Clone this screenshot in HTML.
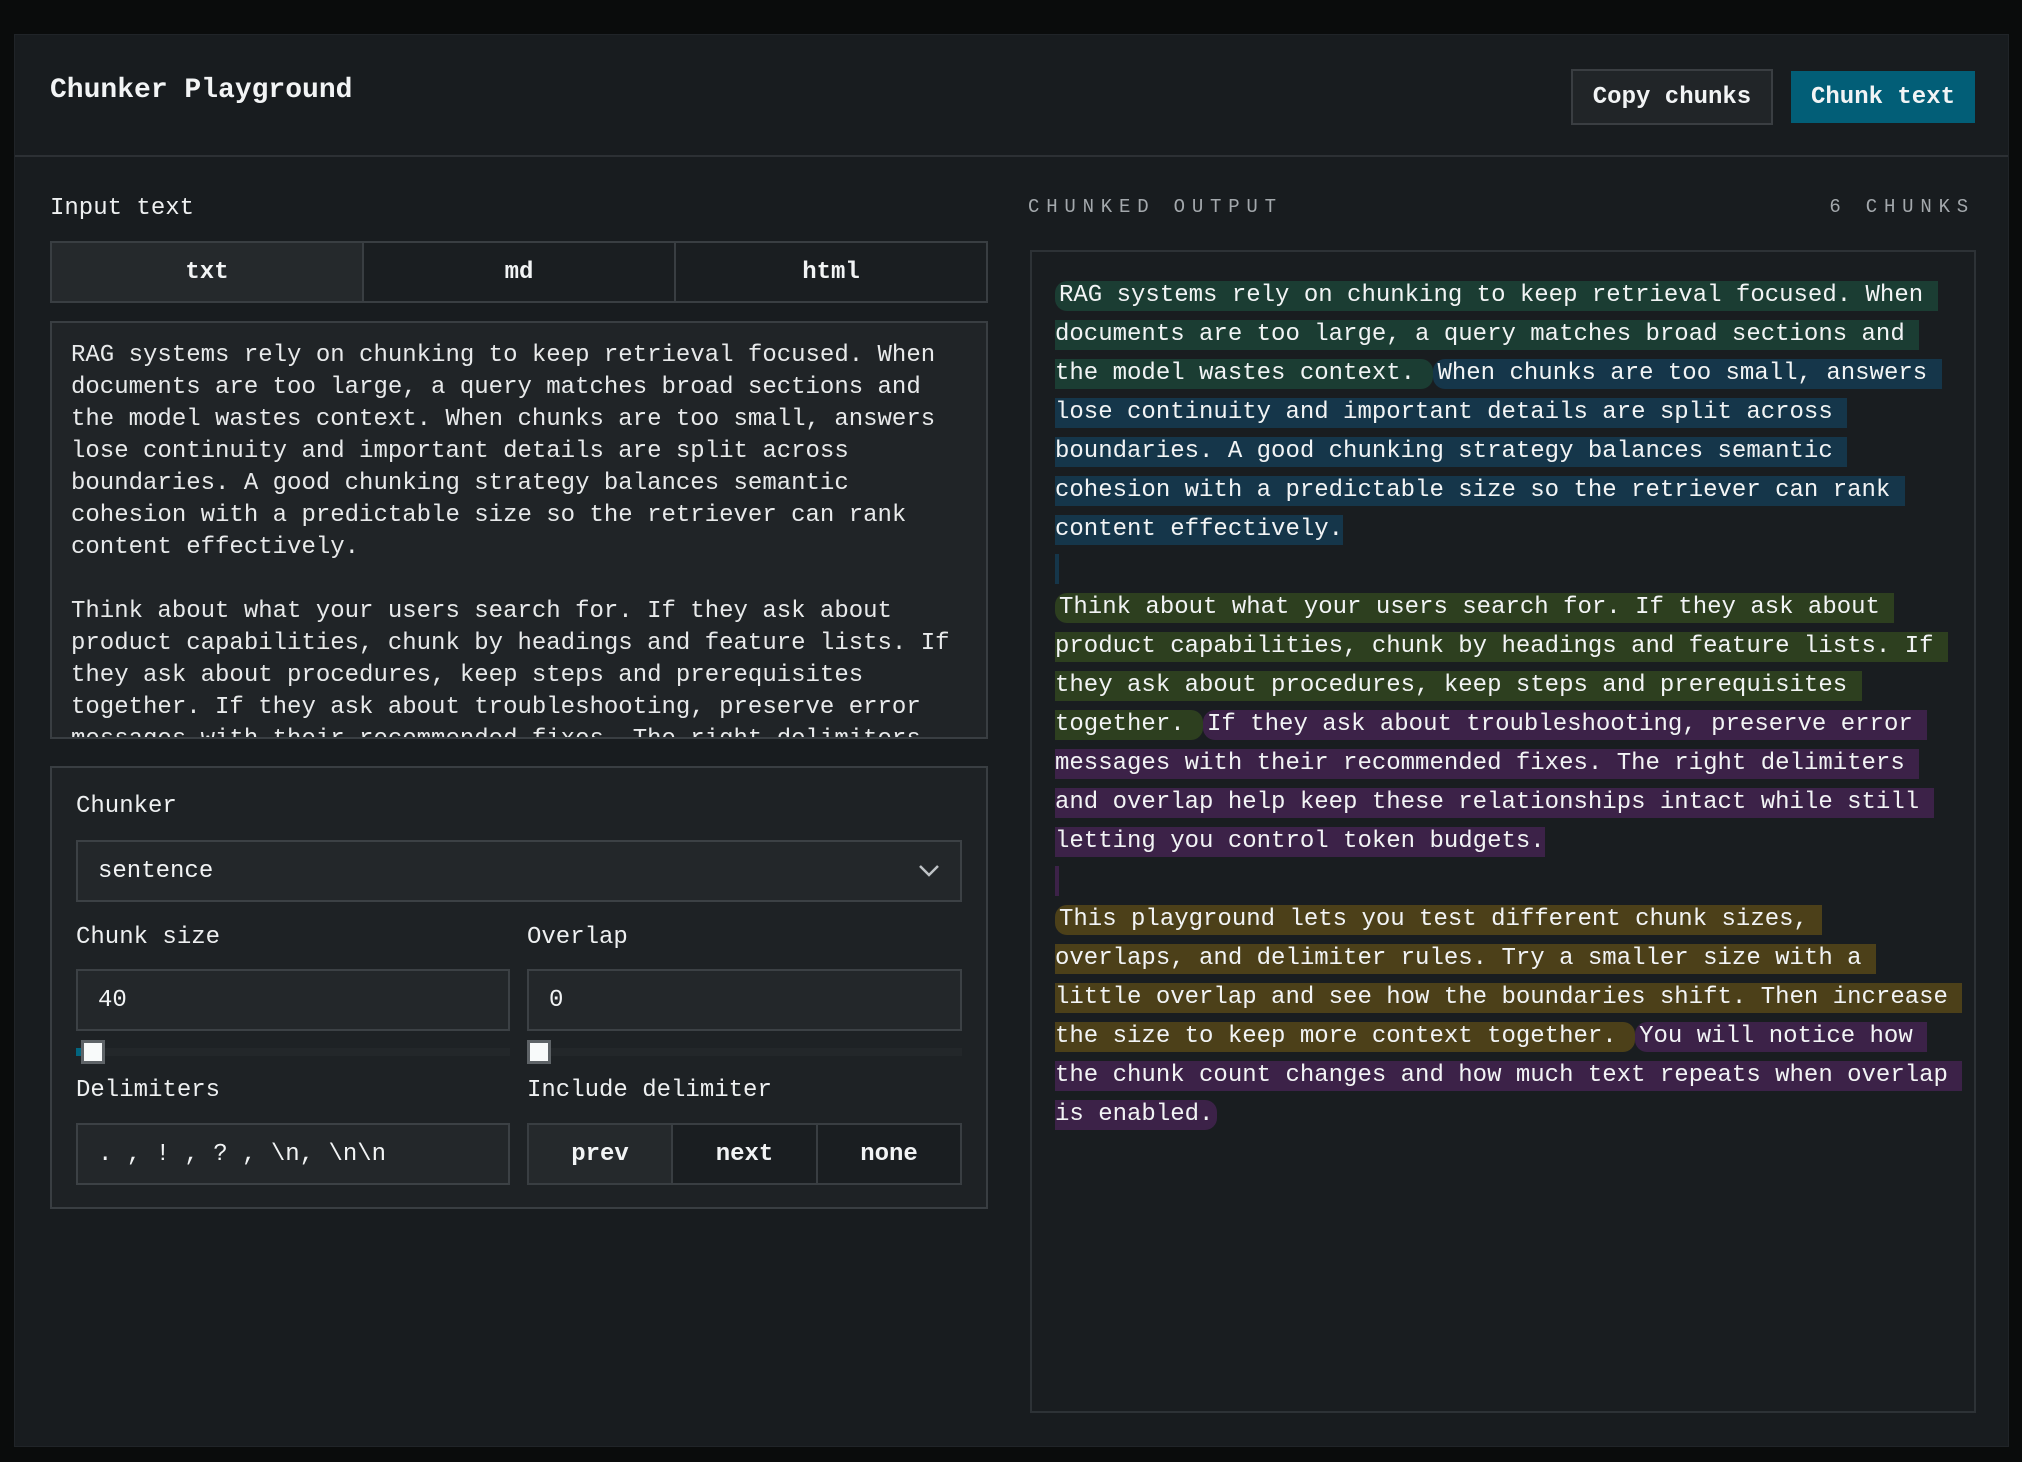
<!DOCTYPE html>
<html><head><meta charset="utf-8"><style>
*{box-sizing:border-box;margin:0;padding:0}
body{width:2022px;height:1462px;background:#0a0c0c;font-family:"Liberation Mono",monospace;color:#f2f4f5;position:relative;overflow:hidden}
.panel{position:absolute;left:14px;top:34px;width:1995px;height:1413px;background:#181c1f;border:1px solid #202428}
.abs{position:absolute}
.hdr{left:0;top:0;width:100%;height:122px;border-bottom:2px solid #2c3034}
.title{left:35px;top:40px;font-size:28px;font-weight:bold}
.btn{font-size:24px;font-weight:bold;display:flex;align-items:center;justify-content:center}
.lbl{font-size:24px;color:#eef0f1}
.box{background:#1e2225;border:2px solid #393e42}
.tab{position:absolute;top:0;height:100%;display:flex;align-items:center;justify-content:center;font-size:24px;font-weight:bold}
.ta{font-size:24px;line-height:32px;white-space:pre;overflow:hidden;padding:17px 0 0 19px;color:#e8eaeb}
.inp{background:#23272a;border:2px solid #3c4145;font-size:24px;display:flex;align-items:center;padding-left:20px}
.track{height:8px;background:#23272a}
.thumb{width:24px;height:24px;background:#f8fafa;border:3px solid #5e6367}
.out{font-size:24px;white-space:pre}
.ln{position:absolute;left:0;height:39px;display:flex;align-items:center}
.s{display:inline-block;height:30px;line-height:30px}
.g{background:#1b3d33}.b{background:#15364a}.o{background:#2d3f1f}.p{background:#3c2248}.y{background:#4c4019}
.st{border-radius:12px 0 0 12px;padding-left:4px}
.en{border-radius:0 12px 12px 0;padding-right:4px}
</style></head><body>
<div class="panel">
  <div class="abs hdr"></div>
  <div class="abs title">Chunker Playground</div>
  <div class="abs btn" style="left:1556px;top:34px;width:202px;height:56px;background:#212528;border:2px solid #3a3e42">Copy chunks</div>
  <div class="abs btn" style="left:1776px;top:36px;width:184px;height:52px;background:#025e77">Chunk text</div>

  <div class="abs lbl" style="left:35px;top:160px">Input text</div>
  <div class="abs box" style="left:35px;top:206px;width:938px;height:62px;background:#1a1e21">
    <div class="tab" style="left:0;width:312px;background:#25292c;border-right:2px solid #393e42">txt</div>
    <div class="tab" style="left:312px;width:312px;border-right:2px solid #393e42">md</div>
    <div class="tab" style="left:624px;width:310px">html</div>
  </div>
  <div class="abs box ta" style="left:35px;top:286px;width:938px;height:418px;background:#202427">RAG systems rely on chunking to keep retrieval focused. When
documents are too large, a query matches broad sections and
the model wastes context. When chunks are too small, answers
lose continuity and important details are split across
boundaries. A good chunking strategy balances semantic
cohesion with a predictable size so the retriever can rank
content effectively.

Think about what your users search for. If they ask about
product capabilities, chunk by headings and feature lists. If
they ask about procedures, keep steps and prerequisites
together. If they ask about troubleshooting, preserve error
messages with their recommended fixes. The right delimiters</div>

  <div class="abs box" style="left:35px;top:731px;width:938px;height:443px"></div>
  <div class="abs lbl" style="left:61px;top:758px">Chunker</div>
  <div class="abs inp" style="left:61px;top:805px;width:886px;height:62px">sentence
    <svg style="position:absolute;right:20px;top:22px" width="22" height="14" viewBox="0 0 22 14"><path d="M2 2 L11 11 L20 2" stroke="#bfc3c6" stroke-width="2.5" fill="none"/></svg></div>
  <div class="abs lbl" style="left:61px;top:889px">Chunk size</div>
  <div class="abs lbl" style="left:512px;top:889px">Overlap</div>
  <div class="abs inp" style="left:61px;top:934px;width:434px;height:62px">40</div>
  <div class="abs inp" style="left:512px;top:934px;width:435px;height:62px">0</div>
  <div class="abs track" style="left:61px;top:1013px;width:434px"></div>
  <div class="abs" style="left:61px;top:1013px;width:8px;height:8px;background:#02657f"></div>
  <div class="abs thumb" style="left:66px;top:1005px"></div>
  <div class="abs track" style="left:512px;top:1013px;width:435px"></div>
  <div class="abs thumb" style="left:512px;top:1005px"></div>
  <div class="abs lbl" style="left:61px;top:1042px">Delimiters</div>
  <div class="abs lbl" style="left:512px;top:1042px">Include delimiter</div>
  <div class="abs inp" style="left:61px;top:1088px;width:434px;height:62px">. , ! , ? , \n, \n\n</div>
  <div class="abs box" style="left:512px;top:1088px;width:435px;height:62px;background:#1a1e21">
    <div class="tab" style="left:0;width:144px;background:#25292c;border-right:2px solid #393e42">prev</div>
    <div class="tab" style="left:144px;width:145px;border-right:2px solid #393e42">next</div>
    <div class="tab" style="left:289px;width:142px">none</div>
  </div>

  <div class="abs" style="left:1013px;top:161px;font-size:19px;letter-spacing:6.8px;color:#a3a8ac">CHUNKED OUTPUT</div>
  <div class="abs" style="right:40px;top:161px;font-size:19px;letter-spacing:6.8px;color:#a3a8ac;margin-right:-7px">6 CHUNKS</div>
  <div class="abs" style="left:1015px;top:215px;width:946px;height:1163px;background:#191d20;border:2px solid #2d3236"></div>
  <div class="abs out" style="left:1040px;top:241px;width:920px">
<div class="ln" style="top:0"><span class="s g st">RAG systems rely on chunking to keep retrieval focused. When </span></div>
<div class="ln" style="top:39px"><span class="s g">documents are too large, a query matches broad sections and </span></div>
<div class="ln" style="top:78px"><span class="s g en">the model wastes context. </span><span class="s b st">When chunks are too small, answers </span></div>
<div class="ln" style="top:117px"><span class="s b">lose continuity and important details are split across </span></div>
<div class="ln" style="top:156px"><span class="s b">boundaries. A good chunking strategy balances semantic </span></div>
<div class="ln" style="top:195px"><span class="s b">cohesion with a predictable size so the retriever can rank </span></div>
<div class="ln" style="top:234px"><span class="s b">content effectively.</span></div>
<div class="ln" style="top:273px"><span class="s b" style="width:4px"></span></div>
<div class="ln" style="top:312px"><span class="s o st">Think about what your users search for. If they ask about </span></div>
<div class="ln" style="top:351px"><span class="s o">product capabilities, chunk by headings and feature lists. If </span></div>
<div class="ln" style="top:390px"><span class="s o">they ask about procedures, keep steps and prerequisites </span></div>
<div class="ln" style="top:429px"><span class="s o en">together. </span><span class="s p st">If they ask about troubleshooting, preserve error </span></div>
<div class="ln" style="top:468px"><span class="s p">messages with their recommended fixes. The right delimiters </span></div>
<div class="ln" style="top:507px"><span class="s p">and overlap help keep these relationships intact while still </span></div>
<div class="ln" style="top:546px"><span class="s p">letting you control token budgets.</span></div>
<div class="ln" style="top:585px"><span class="s p" style="width:4px"></span></div>
<div class="ln" style="top:624px"><span class="s y st">This playground lets you test different chunk sizes, </span></div>
<div class="ln" style="top:663px"><span class="s y">overlaps, and delimiter rules. Try a smaller size with a </span></div>
<div class="ln" style="top:702px"><span class="s y">little overlap and see how the boundaries shift. Then increase </span></div>
<div class="ln" style="top:741px"><span class="s y en">the size to keep more context together. </span><span class="s p st">You will notice how </span></div>
<div class="ln" style="top:780px"><span class="s p">the chunk count changes and how much text repeats when overlap </span></div>
<div class="ln" style="top:819px"><span class="s p en">is enabled.</span></div>
  </div>
</div>
</body></html>
